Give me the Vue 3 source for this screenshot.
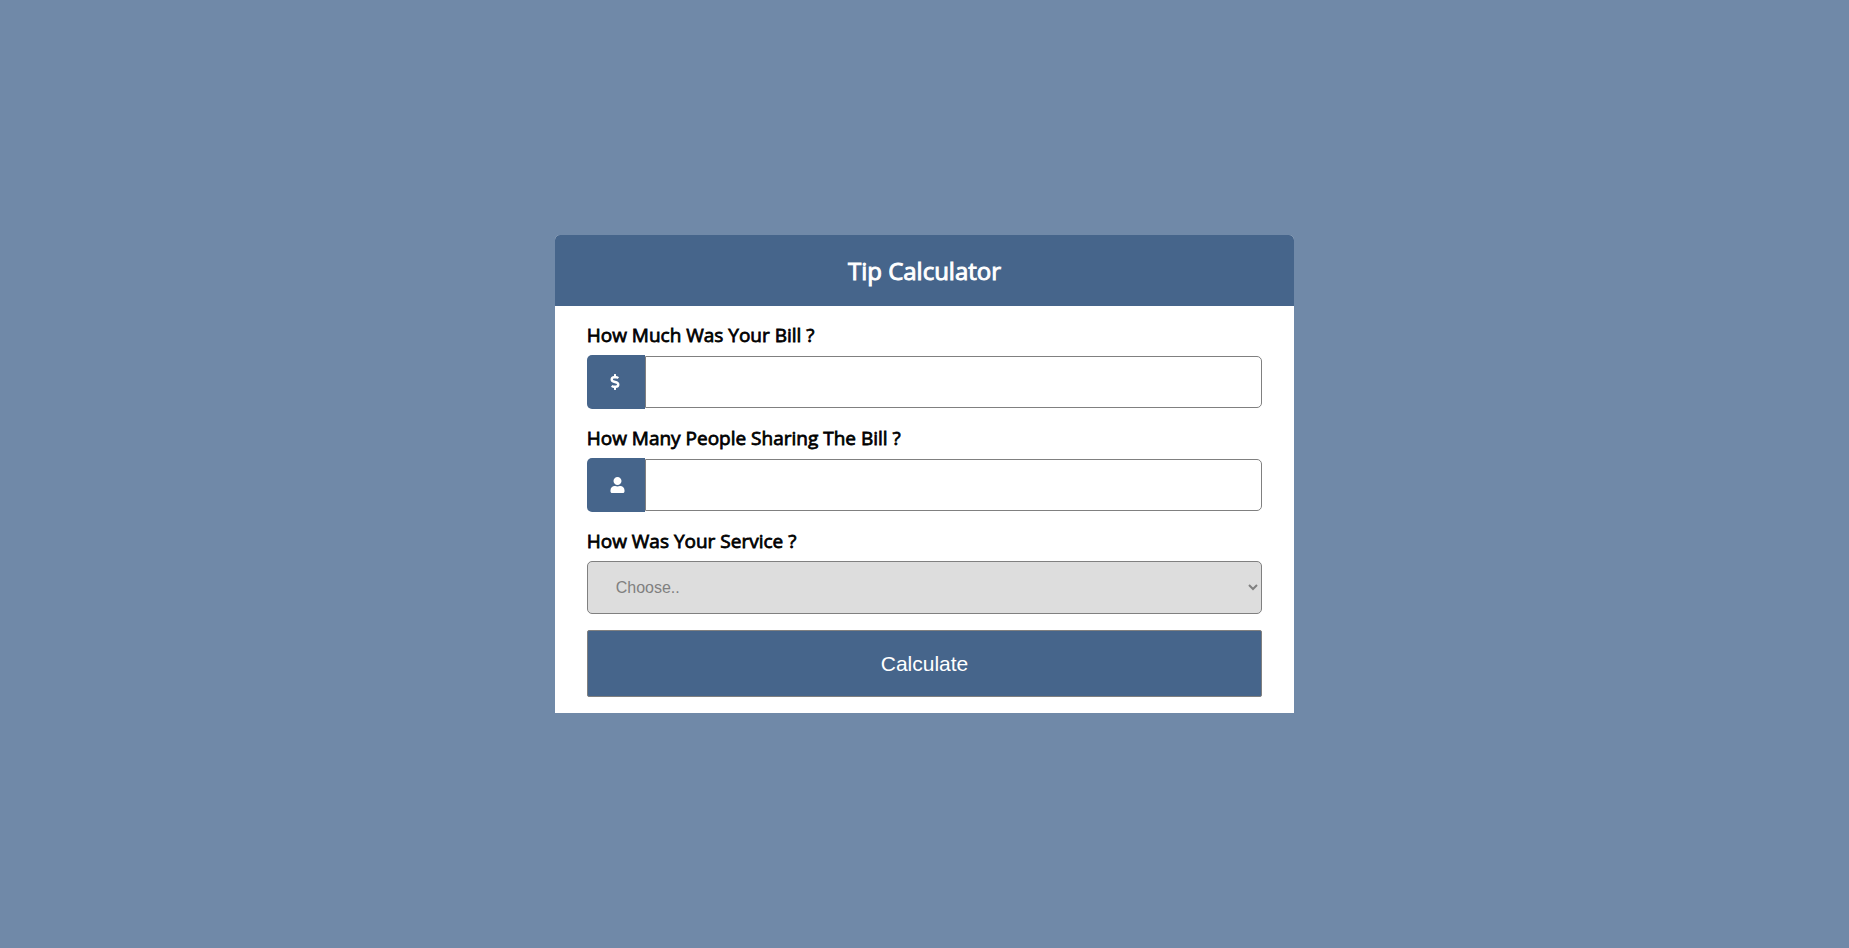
<script setup>
import { ref } from 'vue'

const bill = ref('')
const people = ref('')
const service = ref('')
</script>

<template>
  <main class="page">
    <section class="card">
      <h1 class="title">Tip Calculator</h1>
      <form class="form" @submit.prevent>
        <label class="label" for="bill">How Much Was Your Bill ?</label>
        <div class="group">
          <span class="addon">
            <svg class="icon dollar" viewBox="0 0 288 512" aria-hidden="true">
              <path d="M209.2 233.4l-108-31.600C88.700 198.200 80 186.500 80 173.500c0-16.300 13.200-29.500 29.500-29.500h66.300c12.200 0 24.200 3.700 34.200 10.500 6.100 4.100 14.300 3.100 19.500-2l34.800-34c7.100-6.900 6.100-18.400-1.800-24.500C238 74.800 207.400 64.100 176 64V16c0-8.800-7.200-16-16-16h-32c-8.800 0-16 7.200-16 16v48h-2.500C45.800 64-5.400 118.700.5 183.600c4.200 46.100 39.400 83.600 83.800 96.600l102.500 30c12.500 3.700 21.200 15.300 21.200 28.300 0 16.300-13.200 29.500-29.500 29.500h-66.300C100 368 88 364.300 78 357.500c-6.100-4.100-14.300-3.100-19.500 2l-34.800 34c-7.100 6.900-6.100 18.400 1.800 24.500 24.500 19.200 55.100 29.900 86.500 30v48c0 8.800 7.200 16 16 16h32c8.800 0 16-7.200 16-16v-48.200c46.600-.9 90.300-28.600 105.700-72.700 21.500-61.600-14.600-124.800-72.500-141.700z" />
            </svg>
          </span>
          <input id="bill" v-model="bill" class="input" type="text" inputmode="decimal" />
        </div>
        <label class="label" for="people">How Many People Sharing The Bill ?</label>
        <div class="group">
          <span class="addon">
            <svg class="icon person" viewBox="0 0 448 512" aria-hidden="true">
              <path d="M224 256c70.700 0 128-57.300 128-128S294.700 0 224 0 96 57.300 96 128s57.300 128 128 128zm89.600 32h-16.700c-22.200 10.200-46.900 16-72.900 16s-50.600-5.800-72.900-16h-16.700C60.200 288 0 348.200 0 422.400V464c0 26.500 21.500 48 48 48h352c26.500 0 48-21.500 48-48v-41.600c0-74.200-60.200-134.400-134.400-134.400z" />
            </svg>
          </span>
          <input id="people" v-model="people" class="input" type="text" inputmode="numeric" />
        </div>
        <label class="label" for="service">How Was Your Service ?</label>
        <select id="service" v-model="service" class="select">
          <option value="" disabled>Choose..</option>
          <option value="30">Outstanding</option>
          <option value="20">Good</option>
          <option value="10">Poor</option>
        </select>
        <button class="submit" type="submit">Calculate</button>
      </form>
    </section>
  </main>
</template>

<style>
body {
  margin: 0;
  background: #7089a8;
}
</style>

<style scoped>
.page {
  display: flex;
  align-items: center;
  justify-content: center;
  min-height: 100vh;
  font-family: "Open Sans", sans-serif;
}
.card {
  width: 40%;
  overflow: hidden;
  border-radius: 5px 5px 0 0;
  background: #fff;
}
.title {
  margin: 0;
  padding: 18px 0;
  background: #46658b;
  color: #fff;
  font-size: 24px;
  font-weight: 400;
  line-height: 35px;
  text-align: center;
  -webkit-text-stroke: 0.04em #fff;
}
.form {
  display: flex;
  flex-direction: column;
  padding: 0 32px 16px;
}
.label {
  padding: 16px 0 7px;
  color: #000;
  font-size: 19px;
  line-height: 26px;
  -webkit-text-stroke: 0.04em #000;
}
.group {
  display: flex;
  align-items: center;
}
.addon {
  display: flex;
  align-items: center;
  box-sizing: border-box;
  width: 58px;
  height: 54px;
  padding-left: 23px;
  border-radius: 5px 0 0 5px;
  background: #46658b;
}
.icon {
  height: 16px;
  fill: #fff;
}
.dollar {
  width: 10px;
}
.person {
  width: 15px;
}
.input {
  flex: 1;
  box-sizing: border-box;
  min-width: 0;
  height: 52px;
  padding: 0 16px;
  border: 1px solid #808080;
  border-radius: 0 5px 5px 0;
  background: #fff;
  font-family: "Liberation Sans", sans-serif;
  font-size: 16px;
}
.select {
  box-sizing: border-box;
  width: 100%;
  height: 53px;
  padding: 0 0 0 24px;
  border: 1px solid #808080;
  border-radius: 5px;
  background: #ddd;
  color: #808080;
  font-family: "Liberation Sans", sans-serif;
  font-size: 16px;
}
.submit {
  box-sizing: border-box;
  height: 67px;
  margin-top: 16px;
  border: 1px solid #808080;
  border-radius: 2px;
  background: #46658b;
  color: #fff;
  font-family: "Liberation Sans", sans-serif;
  font-size: 21px;
}
</style>
